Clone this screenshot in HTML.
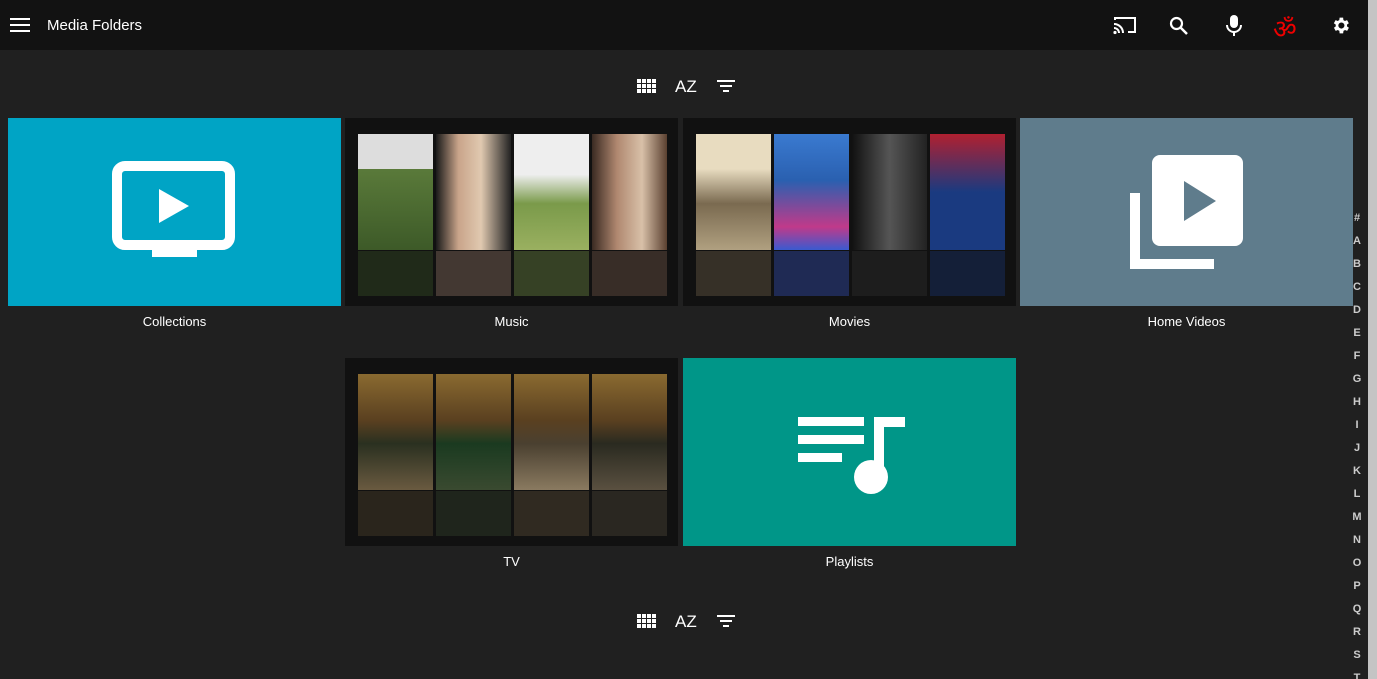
<!DOCTYPE html>
<html><head><style>
html,body{margin:0;width:1377px;height:679px;overflow:hidden}
body{background:#202020;font-family:"Liberation Sans",sans-serif;position:relative;color:#fff}
.hdr{position:absolute;left:0;top:0;width:1368px;height:50px;background:#121212}
.card{position:absolute;width:333px;height:188px}
.lbl{position:absolute;width:333px;text-align:center;font-size:13px}
.alpha{position:absolute;left:1350px;top:207px;width:14px;height:472px;overflow:hidden;font-size:11px;font-weight:bold;color:#ccc;text-align:center;line-height:23px}
.p{position:absolute;width:75px;height:116px}
.refl{position:absolute;width:75px;height:45px;opacity:.35}
</style></head><body>
<div class="hdr"></div>
<div style="position:absolute;left:1368px;top:0;width:9px;height:679px;background:#c4c4c4"></div>
<svg style="position:absolute;left:10px;top:17px" width="20" height="16"><rect y="1" width="20" height="2" fill="#fff"/><rect y="7" width="20" height="2" fill="#fff"/><rect y="13" width="20" height="2" fill="#fff"/></svg>
<div style="position:absolute;left:47px;top:17px;font-size:15px">Media Folders</div>
<svg style="position:absolute;left:1113px;top:15px" width="24" height="20" viewBox="0 0 24 20"><path d="M2 5V3h20v14h-7" stroke="#fff" stroke-width="2" fill="none"/><path d="M1 9a9 9 0 0 1 9 9M1 13a5 5 0 0 1 5 5" stroke="#fff" stroke-width="2" fill="none"/><circle cx="2" cy="17.5" r="1.6" fill="#fff"/></svg>
<svg style="position:absolute;left:1169px;top:16px" width="20" height="20"><circle cx="7.5" cy="7.5" r="5.5" stroke="#fff" stroke-width="2.2" fill="none"/><path d="M11.5 11.5L18 18" stroke="#fff" stroke-width="2.5"/></svg>
<svg style="position:absolute;left:1226px;top:15px" width="16" height="22"><rect x="4" y="0" width="8" height="13" rx="4" fill="#fff"/><path d="M1 10a7 7 0 0 0 14 0" stroke="#fff" stroke-width="2" fill="none"/><rect x="7" y="16" width="2" height="5" fill="#fff"/></svg>
<div style="position:absolute;left:1273px;top:10px;font-size:26px;color:#e00;font-family:'DejaVu Sans',sans-serif">ॐ</div>
<svg style="position:absolute;left:1330px;top:15px" width="21" height="21" viewBox="0 0 24 24"><path fill="#fff" d="M19.4 13a7.5 7.5 0 0 0 0-2l2.1-1.6-2-3.5-2.5 1a7 7 0 0 0-1.7-1L15 3h-4l-.4 2.9a7 7 0 0 0-1.7 1l-2.5-1-2 3.5L6.6 11a7.5 7.5 0 0 0 0 2l-2.1 1.6 2 3.5 2.5-1a7 7 0 0 0 1.7 1L11 21h4l.4-2.9a7 7 0 0 0 1.7-1l2.5 1 2-3.5zM13 15.5a3.5 3.5 0 1 1 0-7 3.5 3.5 0 0 1 0 7z"/></svg>

<div style="position:absolute;left:0;top:0">
<svg style="position:absolute;left:637px;top:79px" width="19" height="16"><g fill="#fff"><rect x="0" y="0" width="4" height="4"/><rect x="5" y="0" width="4" height="4"/><rect x="10" y="0" width="4" height="4"/><rect x="15" y="0" width="4" height="4"/><rect x="0" y="5" width="4" height="4"/><rect x="5" y="5" width="4" height="4"/><rect x="10" y="5" width="4" height="4"/><rect x="15" y="5" width="4" height="4"/><rect x="0" y="10" width="4" height="4"/><rect x="5" y="10" width="4" height="4"/><rect x="10" y="10" width="4" height="4"/><rect x="15" y="10" width="4" height="4"/></g></svg>
<div style="position:absolute;left:675px;top:77px;font-size:17px">AZ</div>
<svg style="position:absolute;left:717px;top:80px" width="18" height="14"><rect x="0" y="0" width="18" height="2" fill="#fff"/><rect x="3" y="5" width="12" height="2" fill="#fff"/><rect x="6" y="10" width="6" height="2" fill="#fff"/></svg>
</div>
<div style="position:absolute;left:0;top:535px">
<svg style="position:absolute;left:637px;top:79px" width="19" height="16"><g fill="#fff"><rect x="0" y="0" width="4" height="4"/><rect x="5" y="0" width="4" height="4"/><rect x="10" y="0" width="4" height="4"/><rect x="15" y="0" width="4" height="4"/><rect x="0" y="5" width="4" height="4"/><rect x="5" y="5" width="4" height="4"/><rect x="10" y="5" width="4" height="4"/><rect x="15" y="5" width="4" height="4"/><rect x="0" y="10" width="4" height="4"/><rect x="5" y="10" width="4" height="4"/><rect x="10" y="10" width="4" height="4"/><rect x="15" y="10" width="4" height="4"/></g></svg>
<div style="position:absolute;left:675px;top:77px;font-size:17px">AZ</div>
<svg style="position:absolute;left:717px;top:80px" width="18" height="14"><rect x="0" y="0" width="18" height="2" fill="#fff"/><rect x="3" y="5" width="12" height="2" fill="#fff"/><rect x="6" y="10" width="6" height="2" fill="#fff"/></svg>
</div>

<div class="card" style="left:8px;top:118px;background:#00a4c5">
<svg style="position:absolute;left:104px;top:43px" width="125" height="102" viewBox="0 0 125 102"><rect x="5" y="5" width="113" height="79" rx="8" stroke="#fff" stroke-width="10" fill="none"/><rect x="40" y="86" width="45" height="10" fill="#fff"/><path d="M47 28v34l30-17z" fill="#fff"/></svg>
</div>
<div class="lbl" style="left:8px;top:314px">Collections</div>

<div class="card" style="left:345px;top:118px;background:#111">
<div class="p" style="left:13px;top:16px;background:linear-gradient(#ddd 0 30%,#5a7a3a 30%,#3d5a28)"></div>
<div class="p" style="left:91px;top:16px;background:linear-gradient(90deg,#1a1a1a,#c9a48a 30%,#e0c9b0 60%,#222)"></div>
<div class="p" style="left:169px;top:16px;background:linear-gradient(#eee 0 35%,#7a9a4a 60%,#9ab060)"></div>
<div class="p" style="left:247px;top:16px;background:linear-gradient(90deg,#3a2a22,#b08870,#d8c0a8,#5a4030)"></div>
<div class="refl" style="left:13px;top:133px;background:#3d5a28"></div><div class="refl" style="left:91px;top:133px;background:#a08070"></div><div class="refl" style="left:169px;top:133px;background:#7a9a4a"></div><div class="refl" style="left:247px;top:133px;background:#806050"></div>
</div>
<div class="lbl" style="left:345px;top:314px">Music</div>

<div class="card" style="left:683px;top:118px;background:#111">
<div class="p" style="left:13px;top:16px;background:linear-gradient(#e8dcc0 0 30%,#7a6a50 60%,#b0a080)"></div>
<div class="p" style="left:91px;top:16px;background:linear-gradient(#3a7ad0,#2a60b0 40%,#c03a8a 80%,#3a5ad0)"></div>
<div class="p" style="left:169px;top:16px;background:linear-gradient(90deg,#111,#555 50%,#222)"></div>
<div class="p" style="left:247px;top:16px;background:linear-gradient(#b02030,#1a3a80 50%,#1a3a80)"></div>
<div class="refl" style="left:13px;top:133px;background:#7a6a50"></div><div class="refl" style="left:91px;top:133px;background:#3a5ad0"></div><div class="refl" style="left:169px;top:133px;background:#333"></div><div class="refl" style="left:247px;top:133px;background:#1a3a80"></div>
</div>
<div class="lbl" style="left:683px;top:314px">Movies</div>

<div class="card" style="left:1020px;top:118px;background:#5f7c8c">
<svg style="position:absolute;left:110px;top:37px" width="113" height="114" viewBox="0 0 113 114"><path d="M5 38v71h79" stroke="#fff" stroke-width="10" fill="none"/><rect x="22" y="0" width="91" height="91" rx="8" fill="#fff"/><path d="M54 26v40l32-20z" fill="#5f7c8c"/></svg>
</div>
<div class="lbl" style="left:1020px;top:314px">Home Videos</div>

<div class="card" style="left:345px;top:358px;background:#111">
<div class="p" style="left:13px;top:16px;background:linear-gradient(#8a6a30,#5a4020 40%,#2a3020 60%,#6a5a40)"></div>
<div class="p" style="left:91px;top:16px;background:linear-gradient(#8a6a30,#5a4020 40%,#1a3a20 60%,#3a4a30)"></div>
<div class="p" style="left:169px;top:16px;background:linear-gradient(#8a6a30,#5a4020 40%,#4a4030 60%,#8a7a60)"></div>
<div class="p" style="left:247px;top:16px;background:linear-gradient(#8a6a30,#5a4020 40%,#2a2a20 60%,#5a5040)"></div>
<div class="refl" style="left:13px;top:133px;background:#5a4a30"></div><div class="refl" style="left:91px;top:133px;background:#3a4a30"></div><div class="refl" style="left:169px;top:133px;background:#6a5a40"></div><div class="refl" style="left:247px;top:133px;background:#5a5040"></div>
</div>
<div class="lbl" style="left:345px;top:554px">TV</div>

<div class="card" style="left:683px;top:358px;background:#009688">
<svg style="position:absolute;left:115px;top:59px" width="108" height="80" viewBox="0 0 108 80"><g fill="#fff"><rect x="0" y="0" width="66" height="9"/><rect x="0" y="18" width="66" height="9"/><rect x="0" y="36" width="44" height="9"/><rect x="76" y="0" width="31" height="10"/><rect x="76" y="0" width="10" height="60"/><circle cx="73" cy="60" r="17"/></g></svg>
</div>
<div class="lbl" style="left:683px;top:554px">Playlists</div>

<div class="alpha">#<br>A<br>B<br>C<br>D<br>E<br>F<br>G<br>H<br>I<br>J<br>K<br>L<br>M<br>N<br>O<br>P<br>Q<br>R<br>S<br>T</div>
</body></html>
